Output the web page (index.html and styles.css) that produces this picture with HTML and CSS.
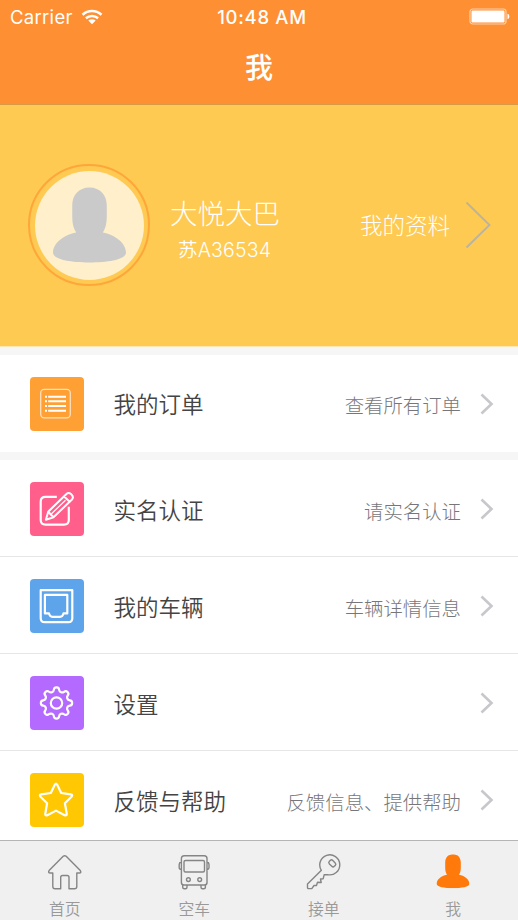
FILE: index.html
```html
<!DOCTYPE html>
<html lang="zh-CN">
<head>
<meta charset="utf-8">
<title>我</title>
<link rel="stylesheet" href="styles.css">
</head>
<body>
<svg width="0" height="0" class="defs">
  <symbol id="person" viewBox="0 0 74 76">
    <path d="M37 0C48 0 54.500 8 54.500 18V30C54.500 37 53 42 50.500 45.500C64 48 74 57 74 66C74 73 56 76 37 76S0 73 0 66C0 57 10 48 23.500 45.500C21 42 19.500 37 19.500 30V18C19.500 8 26 0 37 0Z"/>
  </symbol>
  <symbol id="chevron" viewBox="0 0 14 22">
    <path d="M1.500 1.500L11.500 11L1.500 20.500" fill="none" stroke="#c7c7cc" stroke-width="2.600"/>
  </symbol>
</svg>
<div class="app">
  <header class="header">
    <div class="status">
      <div class="carrier"><span>Carrier</span>
        <svg class="wifi" width="22" height="16" viewBox="0 0 22 16" fill="none" stroke="#fff" stroke-width="2.600">
          <path d="M1.500 5.700C7 .8 15 .8 20.500 5.700M4.900 9.300C8.500 6.200 13.500 6.200 17.100 9.300"/>
          <path d="M11 15.200L7.300 11.500C9.300 9.900 12.700 9.900 14.700 11.500Z" fill="#fff" stroke="none"/>
        </svg>
      </div>
      <div class="time">10:48 AM</div>
      <svg class="battery" width="41" height="17" viewBox="0 0 41 17">
        <rect x="1" y="1" width="36" height="15" rx="2.800" fill="none" stroke="#ffd0a8" stroke-width="1.200"/>
        <rect x="2.500" y="2.500" width="33" height="12" rx="1.200" fill="#fff"/>
        <path d="M38.500 5.800C41 6.300 41 10.700 38.500 11.200Z" fill="#fff"/>
      </svg>
    </div>
    <h1 class="title">我</h1>
  </header>

  <section class="profile">
    <div class="avatar"><div class="avatar-face"><svg width="73" height="76"><use href="#person"/></svg></div></div>
    <div class="identity"><div class="name">大悦大巴</div><div class="plate">苏A36534</div></div>
    <div class="my-info">我的资料</div>
    <svg class="profile-arrow" width="27" height="48" viewBox="0 0 27 48"><path d="M1.500 1.500L24.500 24L1.500 46.500" fill="none" stroke="#b9b3a2" stroke-width="1.800"/></svg>
  </section>

  <section class="group">
    <div class="row">
      <svg class="tile orange" viewBox="0 0 54 54">
        <rect x="10.700" y="12.400" width="29.600" height="28.400" rx="3.500" stroke="#ffe0bd" stroke-width="1.300"/>
        <path d="M15 19.700h2M15 24.300h2M15 29h2M15 33.800h2M18.200 19.700h17.800M18.200 24.300h17.800M18.200 29h17.800M18.200 33.800h17.800" stroke-width="2"/>
      </svg>
      <div class="label">我的订单</div><div class="detail">查看所有订单</div>
      <svg class="chevron"><use href="#chevron"/></svg>
    </div>
  </section>

  <section class="group list">
    <div class="row">
      <svg class="tile pink" viewBox="0 0 54 54">
        <path d="M26.800 14.900H15.500Q10.700 14.900 10.700 19.700V38Q10.700 42.600 15.500 42.600H34Q38.800 42.600 38.800 38V24.800"/>
        <path d="M15.900 37.800L18.200 29.700L36.200 12.200Q38.500 10 41 12Q44.200 14.700 42 17.500L23.500 35.300ZM18.200 29.700L23.500 35.300M34.100 14.400L39.700 19.700" stroke-width="2"/>
        <path d="M21 32.300L35.500 18.200" stroke-width="1.200"/>
      </svg>
      <div class="label">实名认证</div><div class="detail">请实名认证</div>
      <svg class="chevron"><use href="#chevron"/></svg>
    </div>
    <div class="row">
      <svg class="tile blue" viewBox="0 0 54 54">
        <path d="M10.700 11.200H42.300V39.200Q42.300 43.200 38.300 43.200H14.700Q10.700 43.200 10.700 39.200Z"/>
        <path d="M14.900 15.900H37.300V34.400H33.500Q32.800 37.800 30 37.800H22.500Q19.700 37.800 19 34.400H14.900Z"/>
      </svg>
      <div class="label">我的车辆</div><div class="detail">车辆详情信息</div>
      <svg class="chevron"><use href="#chevron"/></svg>
    </div>
    <div class="row">
      <svg class="tile purple" viewBox="0 0 54 54">
        <g transform="translate(26.500 27)">
          <path d="M13.240 -2.630A2.640 2.640 0 0 1 13.240 2.630A3 3 0 0 0 11.220 7.500A2.640 2.640 0 0 1 7.500 11.220A3 3 0 0 0 2.630 13.240A2.640 2.640 0 0 1 -2.630 13.240A3 3 0 0 0 -7.500 11.220A2.640 2.640 0 0 1 -11.220 7.500A3 3 0 0 0 -13.240 2.630A2.640 2.640 0 0 1 -13.240 -2.630A3 3 0 0 0 -11.220 -7.500A2.640 2.640 0 0 1 -7.500 -11.220A3 3 0 0 0 -2.630 -13.240A2.640 2.640 0 0 1 2.630 -13.240A3 3 0 0 0 7.500 -11.220A2.640 2.640 0 0 1 11.220 -7.500A3 3 0 0 0 13.240 -2.630Z"/>
          <circle r="5.700"/>
        </g>
      </svg>
      <div class="label">设置</div><div class="detail"></div>
      <svg class="chevron"><use href="#chevron"/></svg>
    </div>
    <div class="row">
      <svg class="tile yellow" viewBox="0 0 54 54">
        <path d="M24.800 11.700Q26 9.700 27.200 11.700L31.200 20L40.600 21.300Q43.200 21.800 41.500 23.700L34.900 30.200L36.700 40.500Q37 43.200 34.700 42.200L26 37.600L17.300 42.200Q15 43.200 15.300 40.500L17.100 30.200L10.500 23.700Q8.800 21.800 11.400 21.300L20.800 20Z"/>
      </svg>
      <div class="label">反馈与帮助</div><div class="detail">反馈信息、提供帮助</div>
      <svg class="chevron"><use href="#chevron"/></svg>
    </div>
  </section>

  <nav class="tabs">
    <div class="tab">
      <svg class="tab-icon" viewBox="0 0 36 36">
        <path d="M16.200 2.300Q17.700 1 19.200 2.300L33.300 16.600Q34.700 19 32.300 19H29.800V32.500Q29.800 34.700 27.500 34.700H22V23.300Q22 21.500 20.200 21.500H15.500Q13.700 21.500 13.700 23.300V34.700H8Q5.800 34.700 5.800 32.500V19H3.200Q.8 19 2.100 16.600Z"/>
      </svg><span>首页</span>
    </div>
    <div class="tab">
      <svg class="tab-icon" viewBox="0 0 36 36">
        <path d="M8.200 1.700H28.200Q31 1.700 31 4.500V28.500Q31 31 28.500 31H8Q5.400 31 5.400 28.500V4.500Q5.400 1.700 8.200 1.700ZM5.400 7.500Q3.200 8.500 3.200 10.500V13.800Q3.200 15.300 5.400 15.500M31 7.500Q33 8.500 33 10.500V13.800Q33 15.300 31 15.500M6.700 31V33.200Q6.700 34.700 8.300 34.700H9.500Q11 34.700 11 33.200V31M25 31V33.200Q25 34.700 26.500 34.700H27.800Q29.400 34.700 29.400 33.200V31"/>
        <rect x="8" y="6.500" width="20.500" height="11.500" rx="1.500"/>
        <circle cx="12.400" cy="25.600" r="1.900"/><circle cx="23.700" cy="25.600" r="1.900"/>
      </svg><span>空车</span>
    </div>
    <div class="tab">
      <svg class="tab-icon" viewBox="0 0 36 36">
        <path d="M15.400 16.300A10 10 0 1 1 21.600 20.600L18.200 20.700L17.200 24.700L14.500 25L15.200 28.500L11.500 28.300L10.500 31.500L8 31.500L5.800 34.600H2.500Q1.500 34.600 1.500 33.500V30Z"/>
        <rect x="-3.500" y="-2.400" width="7" height="4.800" rx="1.800" transform="translate(26.300 9.400) rotate(45)"/>
      </svg><span>接单</span>
    </div>
    <div class="tab">
      <svg class="tab-icon active"><use href="#person" x="1.500" y=".3" width="33" height="34"/></svg><span>我</span>
    </div>
  </nav>
</div>
</body>
</html>
```
FILE: styles.css
```css
* { box-sizing: border-box; }
body {
  margin: 0;
  background: #f6f6f6;
  font-family: Inter, "Noto Sans CJK SC", sans-serif;
  font-weight: 350;
}
svg { display: block; flex: none; }
.defs { position: absolute; }
.app {
  width: 518px;
  height: 920px;
  display: flex;
  flex-direction: column;
  overflow: hidden;
}
.header {
  height: 105px;
  background: #fe8f32;
  border-bottom: 1px solid #d99a45;
  color: #fff;
}
.status {
  height: 33px;
  padding: 0 8px 0 10px;
  display: grid;
  grid-template-columns: 1fr auto 1fr;
  align-items: center;
  font-size: 18.500px;
}
.carrier { display: flex; align-items: center; gap: 8px; font-weight: 400; letter-spacing: .3px; }
.time { font-weight: 550; letter-spacing: .7px; padding-left: 4px; }
.battery { justify-self: end; }
.title {
  margin: 0;
  line-height: 70px;
  font-size: 28px;
  font-weight: 500;
  text-align: center;
}
.profile {
  height: 242px;
  background: #feca51;
  border-bottom: 1px solid #fee7b0;
  color: #fff;
  display: flex;
  align-items: center;
  padding: 0 26px 1px 28px;
}
.avatar {
  width: 122px;
  height: 122px;
  border: 2px solid #fea63a;
  border-radius: 50%;
  display: grid;
  place-items: center;
}
.avatar-face {
  width: 109px;
  height: 109px;
  border-radius: 50%;
  background: #ffefcb;
  display: grid;
  place-items: center;
}
.avatar-face svg { fill: #cacaca; }
.identity { margin-left: 20px; padding-top: 9px; }
.name { font-size: 27.500px; line-height: 40px; font-weight: 300; }
.plate { font-size: 19.500px; line-height: 32px; padding-left: 8px; letter-spacing: .2px; }
.my-info { margin-left: auto; font-size: 22.500px; font-weight: 300; padding-bottom: 3px; }
.profile-arrow { margin-left: 15px; }
.group { margin-top: 8px; background: #fff; }
.row {
  height: 97px;
  display: flex;
  align-items: center;
  padding: 0 24px 0 30px;
}
.list .row { border-bottom: 1px solid #e6e6e6; padding-top: 2px; }
.list { height: 380px; overflow: hidden; }
.tile {
  width: 54px;
  height: 54px;
  border-radius: 4px;
  fill: none;
  stroke: #fff;
  stroke-width: 2.200;
  stroke-linejoin: round;
}
.orange { background: #fea034; }
.pink { background: #ff5f8a; }
.blue { background: #5da4ea; }
.purple { background: #b469ff; }
.yellow { background: #ffc802; }
.label { margin-left: 29.500px; font-size: 22.500px; color: #444; padding-bottom: 1px; }
.detail { margin-left: auto; font-size: 19.400px; font-weight: 300; color: #77777b; padding-top: 2px; }
.chevron { width: 14px; height: 22px; margin-left: 19px; }
.tabs {
  height: 80px;
  border-top: 1px solid #b5b5b5;
  background: #f0f0f0;
  display: grid;
  grid-template-columns: repeat(4, 1fr);
}
.tab {
  display: flex;
  flex-direction: column;
  align-items: center;
  padding-top: 13px;
  font-size: 15.800px;
  line-height: 24px;
  color: #999;
}
.tab span { margin-top: 8px; }
.tab-icon { width: 36px; height: 36px; fill: none; stroke: #858585; stroke-width: 1.400; stroke-linejoin: round; }
.tab-icon.active { fill: #ff7a0a; stroke: none; }
```
